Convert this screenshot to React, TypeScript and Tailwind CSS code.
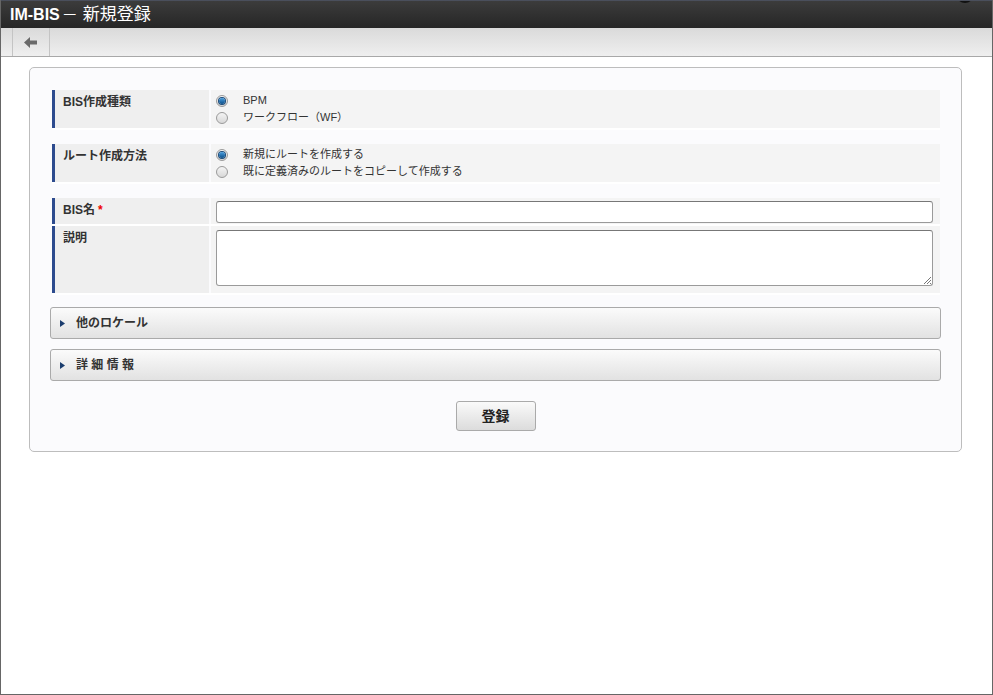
import React from "react";

const font = { fontFamily: '"Liberation Sans", "Noto Sans CJK JP", sans-serif' };

function Radio({ checked }: { checked?: boolean }) {
  return (
    <span className="relative inline-flex h-[12px] w-[12px] shrink-0 items-center justify-center rounded-full border border-[#9a9a9a] bg-gradient-to-b from-[#f4f4f4] to-[#d8d8d8]">
      {checked && <span className="h-[6px] w-[6px] rounded-full bg-gradient-to-b from-[#4aa0e0] to-[#0a4f8a] shadow-[0_0_0_1px_#1a4a7a]" />}
    </span>
  );
}

function Label({ children }: { children: React.ReactNode }) {
  return (
    <div className="flex w-[157px] shrink-0 border-l-[3px] border-[#2d4b8e] bg-[#efefef] pl-[8px] pt-[3px] text-[12px] font-bold text-[#333]">
      {children}
    </div>
  );
}

function Accordion({ title }: { title: string }) {
  return (
    <div className="flex h-[32px] items-center rounded-[3px] border border-[#aaaaaa] bg-gradient-to-b from-[#fbfbfb] to-[#e2e2e2] pl-[9px]">
      <svg width="5" height="7" viewBox="0 0 5 7" className="mr-[11px]"><path d="M0 0 L5 3.5 L0 7 Z" fill="#1b3d6e" /></svg>
      <span className="text-[12px] font-bold text-[#333]">{title}</span>
    </div>
  );
}

function RadioRow({ checked, children }: { checked?: boolean; children: React.ReactNode }) {
  return (
    <div className="flex h-[17px] items-center gap-[15px]"><Radio checked={checked} /><span>{children}</span></div>
  );
}

export default function App() {
  return (
    <div style={font} className="flex h-[695px] w-[993px] flex-col border-b border-l border-r border-[#666] bg-white">
      <div className="relative flex h-[28px] shrink-0 items-center overflow-hidden border-t border-[#4a4f5c] bg-gradient-to-b from-[#3c3c3c] to-[#262626] pl-[9px]">
        <span className="text-[16px] font-bold text-white">IM-BIS</span>
        <span className="ml-[2px] text-[16px] text-white">－</span>
        <span className="ml-[5px] text-[17px] text-white">新規登録</span>
        <span className="absolute right-[18px] top-[-16px] h-[18px] w-[18px] rounded-full bg-[#111]" />
      </div>
      <div className="flex h-[29px] shrink-0 border-b border-[#a8a8a8] bg-gradient-to-b from-[#dadada] to-[#efefef]">
        <div className="ml-[11px] flex w-[38px] items-center justify-center border-l border-r border-[#c4c4c4]">
          <svg width="14" height="11" viewBox="0 0 14 11"><path d="M0 5.5 L6 0 L6 3.5 L13 3.5 L13 7.5 L6 7.5 L6 11 Z" fill="#6a6a6a" /></svg>
        </div>
      </div>
      <div className="pl-[28px] pr-[30px] pt-[10px]">
        <div className="flex h-[385px] flex-col rounded-[5px] border border-[#bdbdbd] bg-[#fbfbfd] px-[20px] pt-[22px]">
          <div className="flex flex-col gap-[14px] pl-[2px] pr-[1px]">
            <div className="flex h-[40px] gap-[2px] border-b-2 border-white">
              <Label>BIS作成種類</Label>
              <div className="flex flex-1 flex-col bg-[#f4f4f4] pl-[5px] pt-[2px] text-[11px] text-[#333]">
                <RadioRow checked>BPM</RadioRow>
                <RadioRow>ワークフロー（WF）</RadioRow>
              </div>
            </div>
            <div className="flex h-[40px] gap-[2px] border-b-2 border-white">
              <Label>ルート作成方法</Label>
              <div className="flex flex-1 flex-col bg-[#f4f4f4] pl-[5px] pt-[2px] text-[11px] text-[#333]">
                <RadioRow checked>新規にルートを作成する</RadioRow>
                <RadioRow>既に定義済みのルートをコピーして作成する</RadioRow>
              </div>
            </div>
            <div className="flex flex-col">
              <div className="flex h-[28px] gap-[2px] border-b-2 border-white">
                <Label>BIS名<span className="ml-[3px] text-[#e00]">*</span></Label>
                <div className="flex flex-1 items-start bg-[#f4f4f4] pl-[5px] pr-[7px] pt-[3px]">
                  <div className="h-[22px] w-full rounded-[3px] border border-[#9a9a9a] border-t-[#777] bg-white" />
                </div>
              </div>
              <div className="flex h-[69px] gap-[2px] border-b-2 border-white">
                <Label>説明</Label>
                <div className="flex flex-1 items-start bg-[#f4f4f4] pl-[5px] pr-[7px] pt-[4px]">
                  <div className="relative h-[56px] w-full rounded-[3px] border border-[#9a9a9a] border-t-[#777] bg-white">
                    <svg width="7" height="7" viewBox="0 0 7 7" className="absolute bottom-[1px] right-[1px]"><path d="M7 0 L0 7 M7 3 L3 7 M7 6 L6 7" stroke="#777" strokeWidth="1" /></svg>
                  </div>
                </div>
              </div>
            </div>
          </div>
          <div className="mt-[12px] flex flex-col gap-[10px]">
            <Accordion title="他のロケール" />
            <Accordion title="詳 細 情 報" />
          </div>
          <div className="mt-[20px] flex justify-center">
            <button className="flex h-[30px] w-[80px] items-center justify-center rounded-[3px] border border-[#aaa] bg-gradient-to-b from-[#fafafa] to-[#dcdcdc] text-[14px] font-bold text-[#222]">登録</button>
          </div>
        </div>
      </div>
    </div>
  );
}
